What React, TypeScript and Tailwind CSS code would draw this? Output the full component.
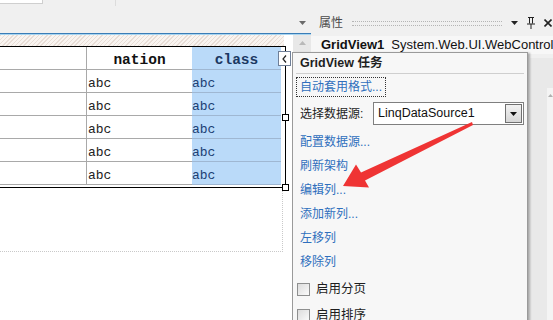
import React from 'react';

const rows = [0, 1, 2, 3, 4];

const taskLinks = ['配置数据源...', '刷新架构', '编辑列...', '添加新列...', '左移列', '移除列'];

function DocWindow() {
  return (
    <div className="w-[311px] shrink-0 flex flex-col">
      {/* tab strip */}
      <div className="h-[33px] flex items-start">
        <div className="w-[43px] h-[4px] bg-white border-b border-r border-[#cfcfcf]" />
        <div className="ml-[72px] w-px h-[6px] bg-[#dcdcdc]" />
        <svg className="ml-auto mr-[5px] mt-[21px]" width="7" height="4" viewBox="0 0 7 4">
          <path d="M0 0h7L3.5 4z" fill="#6a6a6a" />
        </svg>
      </div>
      <div className="h-px bg-[#3a7db7]" />
      <div className="h-px bg-[#a9d5f0]" />

      <div className="flex-1 flex">
        {/* design surface */}
        <div className="w-[293px] bg-white flex flex-col">
          <div className="h-[11px] w-[284px] bg-[repeating-linear-gradient(135deg,#e8ddd6_0px,#e8ddd6_1px,#f9f4f0_1px,#f9f4f0_3px)]" />

          <div className="relative w-[286px] border-t border-r border-b border-black pb-[2px] font-['Liberation_Mono',monospace]">
            <div className="flex h-[23px]">
              <div className="w-[87px] border-r border-b border-[#a9a9a9]" />
              <div className="w-[105px] border-b border-[#a9a9a9] flex items-center justify-center pt-[6px] font-bold text-[14.5px] text-[#111]">
                nation
              </div>
              <div className="w-[89px] bg-[#badaf9] border-b border-[#9fb7d2] flex items-center justify-center pt-[6px] font-bold text-[14.5px] text-[#1b3862]">
                class
              </div>
            </div>
            {rows.map(r => (
              <div key={r} className="flex h-[23px] text-[13px]">
                <div className="w-[87px] border-r border-b border-[#a9a9a9]" />
                <div className="w-[105px] border-b border-[#a9a9a9] flex items-center pt-[6px] pl-px text-[#222]">abc</div>
                <div className="w-[89px] bg-[#badaf9] border-b border-[#9fb7d2] flex items-center pt-[6px] text-[#1c3f74]">abc</div>
              </div>
            ))}

            {/* smart tag + resize handles */}
            <div className="absolute left-[278px] top-[4px] w-[13px] h-[15px] bg-white border border-[#6f7f98] flex items-center justify-center">
              <svg width="5" height="8" viewBox="0 0 5 8">
                <path d="M4 0.5L1 4l3 3.5" stroke="#222" strokeWidth="1.2" fill="none" />
              </svg>
            </div>
            <div className="absolute right-[-4px] top-[67px] w-[7px] h-[7px] bg-white border border-black" />
            <div className="absolute right-[-4px] top-[137px] w-[7px] h-[7px] bg-white border border-black" />
          </div>

          <div className="w-[283px] h-[64px] border-r border-b border-dotted border-[#c9c9c9]" />
        </div>

        {/* vertical scrollbar */}
        <div className="flex-1 bg-[#e8e8e8] flex justify-center pt-[6px]">
          <svg width="7" height="4" viewBox="0 0 7 4">
            <path d="M0 4h7L3.5 0z" fill="#b9b9b9" />
          </svg>
        </div>
      </div>
    </div>
  );
}

function PropertiesPanel() {
  return (
    <div className="flex-1 flex flex-col">
      <div className="h-[33px] pt-[13px] flex items-center pl-[8px] pr-px">
        <span className="text-[12px] text-[#4a4a4a]">属性</span>
        <div className="flex-1 ml-[9px] mr-[9px] h-[5px] border-y border-dotted border-[#b5b5b5]" />
        <svg width="7" height="4" viewBox="0 0 7 4">
          <path d="M0 0h7L3.5 4z" fill="#222" />
        </svg>
        <svg className="ml-[9px]" width="8" height="12" viewBox="0 0 8 12">
          <path d="M1 0.5h6M2.5 0.5v6M5.5 0.5v6M0 7h8M4 7v5" stroke="#222" strokeWidth="1" fill="none" />
        </svg>
        <svg className="ml-[9px]" width="8" height="8" viewBox="0 0 8 8">
          <path d="M0.5 0.5l7 7M7.5 0.5l-7 7" stroke="#222" strokeWidth="1.6" />
        </svg>
      </div>
      <div className="mt-[3px] h-[18px] bg-[#f7f7f7] flex items-center pl-[10px] whitespace-nowrap overflow-hidden text-[13px] text-[#111]">
        <span className="font-bold">GridView1</span>
        <span className="ml-[7px]">System.Web.UI.WebControl</span>
      </div>
      <div className="flex-1 flex">
        <div className="flex-1" />
        <div className="w-[23px] mt-[4px] bg-[#e9e9e9] flex justify-end">
          <div className="w-[6px] mt-[30px] bg-[#f4f4f4] flex justify-center pt-[6px]">
            <svg width="5" height="3" viewBox="0 0 5 3">
              <path d="M0 3h5L2.5 0z" fill="#b0b0b0" />
            </svg>
          </div>
        </div>
      </div>
    </div>
  );
}

function TasksPopup() {
  return (
    <div className="absolute left-[292px] top-[52px] w-[236px] h-[280px] border border-[#9a9a9a] bg-[#f7f7f7] shadow-[2px_1px_2px_rgba(0,0,0,0.3)] flex flex-col">
      <div className="h-[20px] flex items-center pl-[7px] font-bold text-[12.5px] text-[#1e1e1e]">GridView 任务</div>
      <div className="mx-[3px] h-px bg-[#cfcfcf]" />

      <div className="mt-[3px] ml-[3px] self-start h-[20px] px-[3px] flex items-center border border-dotted border-[#333] text-[12px] text-[#2f6fbd]">
        自动套用格式...
      </div>

      <div className="mt-[5px] h-[23px] flex items-center pl-[7px]">
        <span className="text-[12px] text-[#1e1e1e]">选择数据源:</span>
        <div className="ml-auto mr-[3px] w-[151px] h-[23px] border border-[#7f7f7f] bg-white flex items-center pl-[4px] text-[12.5px] text-[#111]">
          LinqDataSource1
          <div className="ml-auto mr-px w-[17px] h-[19px] border border-[#707070] bg-[linear-gradient(#f2f2f2,#d6d6d6)] flex items-center justify-center">
            <svg width="7" height="4" viewBox="0 0 7 4">
              <path d="M0 0h7L3.5 4z" fill="#111" />
            </svg>
          </div>
        </div>
      </div>

      <div className="mt-[5px] flex flex-col">
        {taskLinks.map(label => (
          <div key={label} className="h-[24px] flex items-center pl-[7px] text-[12px] text-[#2f6fbd]">
            {label}
          </div>
        ))}
      </div>

      <div className="mt-[2px] flex flex-col">
        {['启用分页', '启用排序'].map(label => (
          <div key={label} className="h-[26px] flex items-center pl-[4px]">
            <div className="w-[13px] h-[13px] border border-[#8e8f8f] bg-[linear-gradient(135deg,#dcdcdc,#fbfbfb)]" />
            <span className="ml-[6px] text-[12.5px] text-[#1e1e1e]">{label}</span>
          </div>
        ))}
      </div>
    </div>
  );
}

function RedArrow() {
  return (
    <svg className="absolute left-0 top-0 pointer-events-none" width="553" height="320" viewBox="0 0 553 320">
      <polygon
        points="472,122 361,172.5 356,164.5 343,186 369,187.5 365,180.5 473,125"
        fill="#ef3434"
      />
    </svg>
  );
}

export default function App() {
  return (
    <div className="relative w-[553px] h-[320px] overflow-hidden bg-[#f0f0f0] flex font-['Liberation_Sans','Noto_Sans_CJK_SC',sans-serif]">
      <DocWindow />
      <PropertiesPanel />
      <TasksPopup />
      <RedArrow />
    </div>
  );
}
